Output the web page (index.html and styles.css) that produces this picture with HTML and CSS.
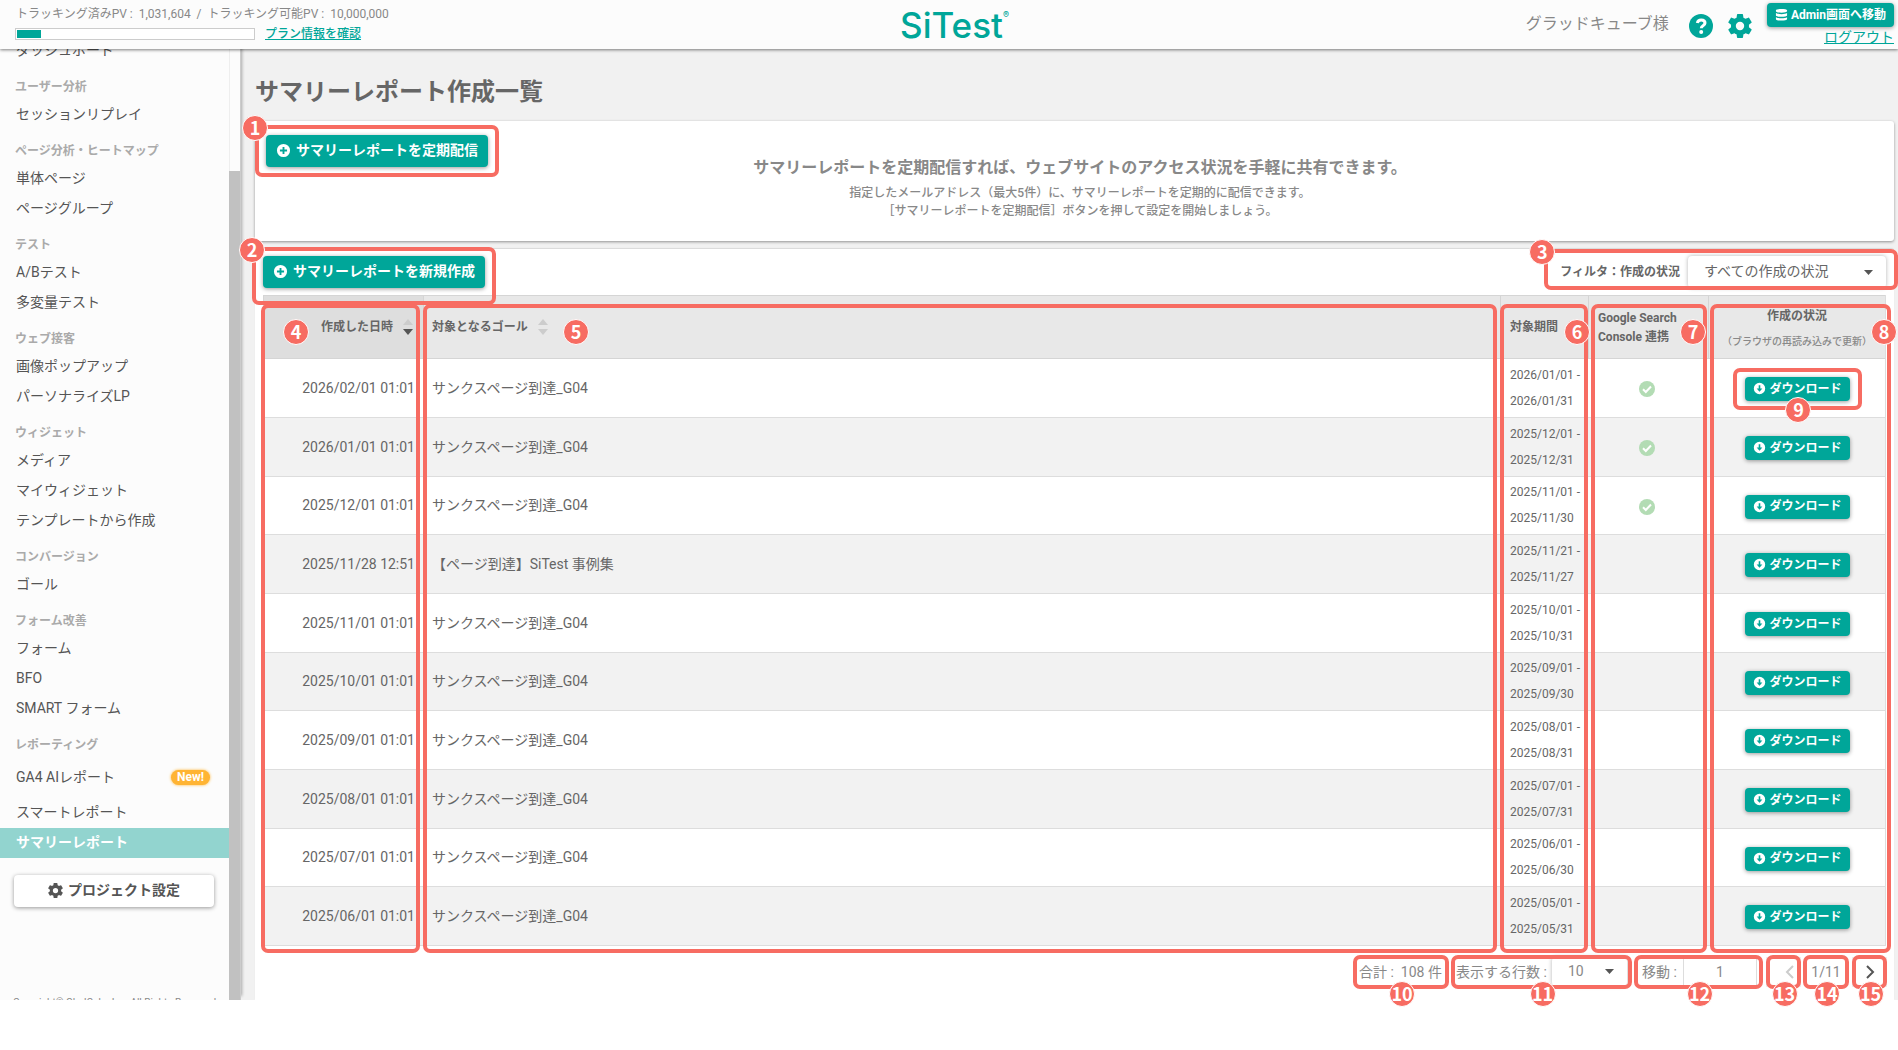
FILE: index.html
```html
<!DOCTYPE html>
<html lang="ja">
<head>
    <meta charset="UTF-8">
    <meta name="viewport" content="width=device-width, initial-scale=1.0">
    <title>サマリーレポート作成一覧 | SiTest</title>
    <link rel="stylesheet" href="styles.css">
</head>
<body>
    <svg class="sprite" aria-hidden="true">
        <symbol id="icon-plus" viewBox="0 0 16 16">
            <path fill-rule="evenodd" d="M8 1a7 7 0 1 0 0 14A7 7 0 0 0 8 1zM7 4.200h2V7h2.800v2H9v2.800H7V9H4.200V7H7z"/>
        </symbol>
        <symbol id="icon-down" viewBox="0 0 16 16">
            <path fill-rule="evenodd" d="M8 1a7 7 0 1 0 0 14A7 7 0 0 0 8 1zM7 4h2v4h2.500L8 12 4.500 8H7z"/>
        </symbol>
        <symbol id="icon-check" viewBox="0 0 16 16">
            <circle cx="8" cy="8" r="8"/>
            <path d="M4 8.300l2.800 2.700L12 5.500" fill="none" stroke="#fff" stroke-width="2"/>
        </symbol>
        <symbol id="icon-help" viewBox="0 0 24 24">
            <circle cx="12" cy="12" r="12"/>
            <path d="M8.300 9c.5-2 1.900-3 3.900-3 2.200 0 3.800 1.200 3.800 3.100 0 2.500-3.700 2.600-3.700 5.200" fill="none" stroke="#fff" stroke-width="3"/>
            <circle cx="12.200" cy="18" r="2" fill="#fff"/>
        </symbol>
        <symbol id="icon-gear" viewBox="2 2 20 20">
            <path d="M19.430 12.980c.04-.32.070-.64.070-.98s-.03-.66-.07-.98l2.110-1.650c.19-.15.24-.42.120-.64l-2-3.460c-.12-.22-.39-.3-.61-.22l-2.490 1c-.52-.4-1.080-.73-1.690-.98l-.38-2.650A.488.488 0 0 0 14 2h-4c-.25 0-.46.180-.49.420l-.38 2.650c-.61.250-1.170.590-1.690.980l-2.490-1c-.23-.09-.49 0-.61.220l-2 3.460c-.13.220-.07.490.12.640l2.110 1.650c-.04.320-.07.650-.07.980s.030.660.070.980l-2.110 1.650c-.19.150-.24.420-.12.640l2 3.460c.12.220.39.300.61.220l2.490-1c.52.400 1.080.730 1.690.980l.38 2.650c.03.240.24.420.49.420h4c.25 0 .46-.18.490-.42l.38-2.650c.61-.25 1.170-.59 1.690-.98l2.490 1c.23.090.49 0 .61-.22l2-3.460c.12-.22.070-.49-.12-.64l-2.110-1.650zM12 15.500a3.500 3.500 0 1 1 0-7 3.500 3.500 0 0 1 0 7z"/>
        </symbol>
        <symbol id="icon-database" viewBox="0 0 14 14">
            <path d="M1 2.500C1 .5 13 .5 13 2.500v1c0 2-12 2-12 0zM1 5.500c2 1.500 10 1.500 12 0v2.500c0 1.900-12 1.900-12 0zM1 10c2 1.500 10 1.500 12 0v2c0 2-12 2-12 0z"/>
        </symbol>
        <symbol id="icon-sort" viewBox="0 0 12 16">
            <path class="sort-up" d="M6 0l5 6H1z"/>
            <path class="sort-down" d="M6 16l5-6H1z"/>
        </symbol>
    </svg>

    <div class="app">
        <header class="header">
            <div class="usage">
                <div class="usage-text">トラッキング済みPV :&nbsp; 1,031,604 &nbsp;/&nbsp; トラッキング可能PV :&nbsp; 10,000,000</div>
                <div class="usage-row">
                    <div class="usage-bar"><div class="usage-fill" style="width: 10.3%"></div></div>
                    <a class="usage-link" href="#">プラン情報を確認</a>
                </div>
            </div>
            <a class="logo" href="#">SiTest<sup>®</sup></a>
            <div class="account">
                <span class="account-name">グラッドキューブ様</span>
                <a class="account-icon" href="#" aria-label="ヘルプ"><svg><use href="#icon-help"/></svg></a>
                <a class="account-icon" href="#" aria-label="設定"><svg><use href="#icon-gear"/></svg></a>
                <div class="account-links">
                    <button class="btn btn-small"><svg class="icon"><use href="#icon-database"/></svg>Admin画面へ移動</button>
                    <a href="#">ログアウト</a>
                </div>
            </div>
        </header>

        <div class="content">
            <aside class="sidebar">
                <div class="sidebar-body">
                    <nav class="nav">
                        <a href="#">ダッシュボード</a>
                        <h2>ユーザー分析</h2>
                        <a href="#">セッションリプレイ</a>
                        <h2>ページ分析・ヒートマップ</h2>
                        <a href="#">単体ページ</a>
                        <a href="#">ページグループ</a>
                        <h2>テスト</h2>
                        <a href="#">A/Bテスト</a>
                        <a href="#">多変量テスト</a>
                        <h2>ウェブ接客</h2>
                        <a href="#">画像ポップアップ</a>
                        <a href="#">パーソナライズLP</a>
                        <h2>ウィジェット</h2>
                        <a href="#">メディア</a>
                        <a href="#">マイウィジェット</a>
                        <a href="#">テンプレートから作成</a>
                        <h2>コンバージョン</h2>
                        <a href="#">ゴール</a>
                        <h2>フォーム改善</h2>
                        <a href="#">フォーム</a>
                        <a href="#">BFO</a>
                        <a href="#">SMART フォーム</a>
                        <h2>レポーティング</h2>
                        <a class="nav-new" href="#">GA4 AIレポート <span class="tag">New!</span></a>
                        <a href="#">スマートレポート</a>
                        <a class="active" href="#">サマリーレポート</a>
                    </nav>
                    <button class="project-btn"><svg class="icon"><use href="#icon-gear"/></svg>プロジェクト設定</button>
                    <p class="copyright">Copyright© GladCube Inc. All Rights Reserved.</p>
                </div>
                <div class="scrollbar"><div class="scrollbar-thumb"></div></div>
            </aside>

            <main class="main">
                <h1>サマリーレポート作成一覧</h1>

                <section class="panel intro">
                    <div class="marked">
                        <button class="btn"><svg class="icon"><use href="#icon-plus"/></svg>サマリーレポートを定期配信</button>
                        <span class="callout callout-button"><b class="num num-corner">1</b></span>
                    </div>
                    <div class="intro-text">
                        <h2>サマリーレポートを定期配信すれば、ウェブサイトのアクセス状況を手軽に共有できます。</h2>
                        <p>指定したメールアドレス（最大5件）に、サマリーレポートを定期的に配信できます。</p>
                        <p>［サマリーレポートを定期配信］ボタンを押して設定を開始しましょう。</p>
                    </div>
                </section>

                <section class="panel list">
                    <div class="toolbar">
                        <div class="marked">
                            <button class="btn"><svg class="icon"><use href="#icon-plus"/></svg>サマリーレポートを新規作成</button>
                            <span class="callout callout-button"><b class="num num-corner">2</b></span>
                        </div>
                        <div class="marked filter">
                            <label for="status">フィルタ：作成の状況</label>
                            <select id="status"><option>すべての作成の状況</option></select>
                            <span class="callout callout-filter"><b class="num num-corner">3</b></span>
                        </div>
                    </div>

                    <div class="table-wrap">
                        <table>
                            <colgroup>
                                <col class="col-date"><col><col class="col-period"><col class="col-gsc"><col class="col-status">
                            </colgroup>
                            <thead>
                                <tr>
                                    <th class="date sorted">作成した日時<svg class="sort"><use href="#icon-sort"/></svg></th>
                                    <th>対象となるゴール<svg class="sort"><use href="#icon-sort"/></svg></th>
                                    <th class="period">対象期間</th>
                                    <th class="wrap">Google Search<br>Console 連携</th>
                                    <th class="status">作成の状況<small>（ブラウザの再読み込みで更新）</small></th>
                                </tr>
                            </thead>
                            <tbody id="rows"></tbody>
                        </table>
                        <div class="column-marks">
                            <span class="callout"><b class="num">4</b></span>
                            <span class="callout"><b class="num">5</b></span>
                            <span class="callout"><b class="num">6</b></span>
                            <span class="callout"><b class="num">7</b></span>
                            <span class="callout"><b class="num">8</b></span>
                        </div>
                    </div>

                    <div class="pager">
                        <div class="marked pager-total">合計 :&nbsp; 108 件<span class="callout callout-pager"><b class="num num-bottom">10</b></span></div>
                        <div class="marked pager-rows">
                            <label for="per-page">表示する行数 :</label>
                            <select id="per-page"><option>10</option></select>
                            <span class="callout callout-pager"><b class="num num-bottom">11</b></span>
                        </div>
                        <div class="marked pager-jump">
                            <label for="page">移動 :</label>
                            <input id="page" type="text" value="1">
                            <span class="callout callout-pager"><b class="num num-bottom">12</b></span>
                        </div>
                        <div class="marked pager-prev">
                            <button disabled aria-label="前へ"><svg viewBox="0 0 10 14"><path d="M8 1L2 7l6 6"/></svg></button>
                            <span class="callout callout-pager"><b class="num num-bottom">13</b></span>
                        </div>
                        <div class="marked pager-pages">1/11<span class="callout callout-pager"><b class="num num-bottom">14</b></span></div>
                        <div class="marked pager-next">
                            <button aria-label="次へ"><svg viewBox="0 0 10 14"><path d="M2 1l6 6-6 6"/></svg></button>
                            <span class="callout callout-pager"><b class="num num-bottom">15</b></span>
                        </div>
                    </div>
                </section>
            </main>
        </div>
    </div>
    <script src="script.js"></script>
</body>
</html>
```
FILE: styles.css
```css
* {
    box-sizing: border-box;
}

body {
    margin: 0;
    min-height: 100vh;
    padding-bottom: 50px;
    background: #fff;
    color: #666;
    font-family: Roboto, 'Noto Sans CJK JP', sans-serif;
    font-size: 14px;
    line-height: 20px;
}

h1, h2, p {
    margin: 0;
}

a {
    color: #00a699;
}

button, select, input {
    font: inherit;
    color: inherit;
}

button {
    cursor: pointer;
}

.sprite {
    display: none;
}

.app {
    height: calc(100vh - 50px);
    display: flex;
    flex-direction: column;
}

/* header */

.header {
    display: grid;
    grid-template-columns: 1fr auto 1fr;
    height: 49px;
    flex: none;
    padding: 0 4px 0 15px;
    background: #fcfcfc;
    box-shadow: 0 1px 3px rgba(0, 0, 0, 0.5);
    z-index: 3;
}

.usage {
    color: #888;
    font-size: 12px;
    padding-top: 4px;
}

.usage-text {
    padding-left: 1px;
}

.usage-row {
    display: flex;
    align-items: center;
    gap: 10px;
}

.usage-bar {
    width: 240px;
    height: 12px;
    padding: 1px;
    border: 1px solid #ccc;
    background: #fff;
}

.usage-fill {
    height: 8px;
    background: #00a699;
}

.usage-link {
    font-weight: 500;
}

.logo {
    display: flex;
    align-items: center;
    color: #00a699;
    font-family: Inter, sans-serif;
    font-size: 35px;
    font-weight: 500;
    text-decoration: none;
}

.logo sup {
    align-self: flex-start;
    font-size: 9px;
    line-height: 30px;
}

.account {
    display: flex;
    justify-content: flex-end;
    color: #888;
    font-size: 16px;
}

.account-name {
    padding-top: 14px;
    margin-right: 20px;
}

.account-icon {
    width: 24px;
    height: 24px;
    margin: 14px 15px 0 0;
}

.account-icon svg {
    width: 24px;
    height: 24px;
    fill: #00a699;
}

.account-links {
    display: flex;
    flex-direction: column;
    align-items: flex-end;
    padding-top: 3px;
    font-size: 14px;
}

/* buttons */

.btn {
    display: flex;
    align-items: center;
    gap: 5px;
    height: 32px;
    padding: 0 10px 2px;
    border: none;
    border-radius: 4px;
    background: #00a699;
    color: #fff;
    font-weight: bold;
    white-space: nowrap;
    box-shadow: 0 1px 4px rgba(0, 0, 0, 0.4);
}

.icon {
    width: 15px;
    height: 15px;
    flex: none;
    fill: currentColor;
}

.btn-small {
    height: 24px;
    padding: 0 8px 1px;
    gap: 3px;
    font-size: 12px;
}

.btn-small .icon {
    width: 13px;
    height: 13px;
}

/* sidebar */

.content {
    display: flex;
    flex: 1;
    min-height: 0;
    background: #f1f1f1;
}

.sidebar {
    display: flex;
    width: 241px;
    flex: none;
    overflow: hidden;
    background: #fcfcfc;
    border-right: 1px solid #ccc;
    box-shadow: 1px -4px 3px rgba(0, 0, 0, 0.3);
}

.sidebar-body {
    flex: 1;
}

.nav {
    margin-top: -13px;
}

.nav a {
    display: flex;
    align-items: center;
    height: 30px;
    padding: 0 16px 2px;
    color: #555;
    text-decoration: none;
}

.nav h2 {
    height: 34px;
    padding: 11px 15px 0;
    color: #aaa;
    font-size: 12px;
    line-height: 20px;
}

.nav .nav-new {
    height: 40px;
    justify-content: space-between;
    padding-right: 19px;
}

.nav .active {
    background: #92d4cf;
    color: #fff;
    font-weight: bold;
}

.tag {
    padding: 0 6px;
    border-radius: 8px;
    background: #ffb433;
    box-shadow: 0 0 3px #ffb433;
    color: #fff;
    font-size: 12px;
    font-weight: bold;
    line-height: 15px;
}

.project-btn {
    display: flex;
    align-items: center;
    justify-content: center;
    gap: 5px;
    width: 200px;
    height: 32px;
    margin: 17px auto 0 14px;
    padding: 0 0 2px;
    border: none;
    border-radius: 4px;
    background: #fff;
    color: #555;
    font-weight: bold;
    box-shadow: 0 1px 4px rgba(0, 0, 0, 0.4);
}

.copyright {
    margin-top: 86px;
    padding-left: 13px;
    color: #888;
    font-size: 10px;
    white-space: nowrap;
}

.scrollbar {
    width: 11px;
    padding-top: 122px;
    border-left: 1px solid #eee;
}

.scrollbar-thumb {
    height: 100%;
    margin-left: -1px;
    background: #c1c1c1;
}

/* main */

.main {
    display: flex;
    flex-direction: column;
    flex: 1;
    min-width: 0;
    padding: 0 4px 0 14px;
}

.main h1 {
    padding: 25px 0 11px;
    font-size: 24px;
    line-height: 36px;
}

.panel {
    background: #fff;
    border-radius: 3px;
    box-shadow: 0 1px 3px rgba(0, 0, 0, 0.4);
}

.intro {
    display: grid;
    height: 120px;
    flex: none;
    margin-bottom: 8px;
    padding: 14px 0 0 11px;
}

.intro > * {
    grid-area: 1 / 1;
    align-self: start;
}

.intro > .marked {
    justify-self: start;
}

.intro-text {
    padding-top: 22px;
    color: #888;
    font-size: 12px;
    font-weight: 500;
    line-height: 18px;
    text-align: center;
}

.intro-text h2 {
    padding-bottom: 5px;
    font-size: 16px;
    line-height: 22px;
}

.list {
    flex: 1;
    padding: 7px 8px 0;
    border-radius: 3px 3px 0 0;
    box-shadow: 0 -1px 1px rgba(0, 0, 0, 0.1);
}

.toolbar {
    display: flex;
    justify-content: space-between;
    height: 39px;
}

.filter {
    display: flex;
    align-items: center;
    gap: 8px;
    height: 32px;
    font-size: 12px;
    font-weight: bold;
}

select {
    height: 32px;
    padding: 0 16px 2px;
    border: none;
    border-radius: 4px;
    appearance: none;
    background: #fff url("data:image/svg+xml,%3Csvg xmlns='http://www.w3.org/2000/svg' width='9' height='5'%3E%3Cpath d='M0 0h9L4.500 5z' fill='%23555'/%3E%3C/svg%3E") no-repeat right 13px center;
    box-shadow: 0 0 4px rgba(0, 0, 0, 0.3);
    font-size: 14px;
    font-weight: normal;
}

.filter select {
    width: 198px;
}

/* table */

.table-wrap {
    position: relative;
}

table {
    width: 100%;
    table-layout: fixed;
    border-collapse: separate;
    border-spacing: 0;
    border-right: 1px solid #ddd;
}

.col-date {
    width: 160px;
}

.col-period {
    width: 88px;
}

.col-gsc {
    width: 120px;
}

.col-status {
    width: 177px;
}

th {
    height: 64px;
    padding: 0 8px;
    border: solid #d5d5d5;
    border-width: 1px 0 1px 1px;
    background: #e8e8e8;
    font-size: 12px;
    line-height: 19px;
    text-align: left;
}

.sorted {
    background: #dedede;
}

.wrap {
    padding: 2px 9px 0;
    white-space: nowrap;
}

.date {
    padding-right: 9px;
    text-align: right;
}

.sort {
    width: 12px;
    height: 16px;
    margin-left: 9px;
    vertical-align: middle;
    fill: #ccc;
}

.sorted .sort {
    --down: #555;
}

.sort-down {
    fill: var(--down, #ccc);
}

th.status {
    padding: 4px 0 0;
    text-align: center;
}

small {
    display: block;
    padding-top: 6px;
    color: #888;
    font-size: 10px;
    font-weight: 500;
    line-height: 20px;
}

td {
    height: 59px;
    padding: 2px 8px 3px 9px;
    border-bottom: 1px solid #ddd;
}

tr:nth-child(3n) td {
    height: 58px;
}

tr:nth-child(even) td {
    background: #f2f2f2;
}

td.date {
    padding-right: 8px;
}

.period {
    padding-left: 9px;
    font-size: 12px;
    line-height: 26px;
    white-space: nowrap;
}

td.period {
    padding-left: 10px;
}

.gsc {
    padding: 4px 12px 2px 9px;
}

.gsc svg {
    display: block;
    width: 16px;
    height: 16px;
    margin: 0 auto;
    fill: #b3dcb4;
}

td.status {
    padding: 4px 0 2px 2px;
    text-align: center;
}

.status .marked {
    display: inline-block;
    vertical-align: middle;
}

/* pager */

.pager {
    display: flex;
    justify-content: flex-end;
    margin-right: -1px;
    padding-top: 9px;
    color: #888;
}

.pager .marked {
    display: flex;
    align-items: center;
    height: 34px;
    padding-bottom: 1px;
}

.pager label {
    white-space: nowrap;
}

.pager-total {
    width: 96px;
    padding-left: 6px;
    margin-right: 2px;
    white-space: nowrap;
}

.pager-rows {
    width: 181px;
    gap: 5px;
    padding-left: 5px;
    margin-right: 2px;
}

.pager-rows select {
    width: 75px;
    height: 29px;
}

.pager-jump {
    width: 129px;
    gap: 6px;
    padding-left: 8px;
    margin-right: 3px;
}

.pager-jump input {
    width: 74px;
    height: 30px;
    border: 1px solid #ddd;
    text-align: center;
}

.pager-prev {
    width: 35px;
    margin-right: 2px;
}

.pager-pages {
    width: 46px;
    justify-content: center;
    margin-right: 3px;
}

.pager-next {
    width: 35px;
}

.pager button {
    width: 100%;
    height: 30px;
    padding: 4px 0 0 12px;
    border: 1px solid #eee;
    background: #fff;
}

.pager-next button {
    padding-left: 1px;
}

.pager svg {
    width: 10px;
    height: 14px;
    fill: none;
    stroke: #555;
    stroke-width: 2;
}

.pager button:disabled svg {
    stroke: #ccc;
}

/* numbered callouts */

.marked {
    position: relative;
}

.callout {
    position: absolute;
    border: 4px solid #f76c62;
    border-radius: 7px;
    pointer-events: none;
    z-index: 1;
}

.callout-button {
    inset: -10px -11px;
}

.list .callout-button {
    inset: -9px -11px -10px;
}

.callout-filter {
    inset: -7px -12px -2px -16px;
}

.callout-download {
    inset: -9px -12px;
}

.callout-pager {
    inset: 0;
}

.num {
    position: absolute;
    top: 11px;
    left: 50%;
    width: 26px;
    height: 26px;
    border: 1px solid #fff;
    border-radius: 50%;
    background: #f76c62;
    color: #fff;
    font: bold 18px/22px 'Noto Sans CJK JP', sans-serif;
    text-align: center;
}

.num-corner {
    top: -14px;
    left: -17px;
}

.callout-filter .num {
    left: -19px;
}

.num-bottom {
    top: 100%;
    margin: -9px 0 0 -12px;
}

.callout-pager .num {
    margin-top: -4px;
}

.column-marks {
    position: absolute;
    inset: 9px -5px -7px -2px;
    display: grid;
    grid-template-columns: 159px 1fr 88px 116px 181px;
    column-gap: 3px;
}

.column-marks .callout {
    position: relative;
}

.column-marks .num {
    left: auto;
    right: -6px;
}

.column-marks .callout:nth-child(1) .num {
    left: 18px;
}

.column-marks .callout:nth-child(2) .num {
    left: 136px;
}

.column-marks .callout:nth-child(4) .num {
    right: -3px;
}

.column-marks .callout:nth-child(5) .num {
    right: -10px;
}
```
FILE: script.js
```js
const goal = 'サンクスページ到達_G04';

const reports = [
    { created: '2026/02/01 01:01', goal, from: '2026/01/01', to: '2026/01/31', gsc: true },
    { created: '2026/01/01 01:01', goal, from: '2025/12/01', to: '2025/12/31', gsc: true },
    { created: '2025/12/01 01:01', goal, from: '2025/11/01', to: '2025/11/30', gsc: true },
    { created: '2025/11/28 12:51', goal: '【ページ到達】SiTest 事例集', from: '2025/11/21', to: '2025/11/27' },
    { created: '2025/11/01 01:01', goal, from: '2025/10/01', to: '2025/10/31' },
    { created: '2025/10/01 01:01', goal, from: '2025/09/01', to: '2025/09/30' },
    { created: '2025/09/01 01:01', goal, from: '2025/08/01', to: '2025/08/31' },
    { created: '2025/08/01 01:01', goal, from: '2025/07/01', to: '2025/07/31' },
    { created: '2025/07/01 01:01', goal, from: '2025/06/01', to: '2025/06/30' },
    { created: '2025/06/01 01:01', goal, from: '2025/05/01', to: '2025/05/31' }
];

document.getElementById('rows').innerHTML = reports.map((r, i) => `
    <tr>
        <td class="date">${r.created}</td>
        <td>${r.goal}</td>
        <td class="period">${r.from} -<br>${r.to}</td>
        <td class="gsc">${r.gsc ? '<svg role="img" aria-label="連携済み"><use href="#icon-check"/></svg>' : ''}</td>
        <td class="status">
            <div class="marked">
                <button class="btn btn-small"><svg class="icon"><use href="#icon-down"/></svg>ダウンロード</button>
                ${i === 0 ? '<span class="callout callout-download"><b class="num num-bottom">9</b></span>' : ''}
            </div>
        </td>
    </tr>`).join('');
```
